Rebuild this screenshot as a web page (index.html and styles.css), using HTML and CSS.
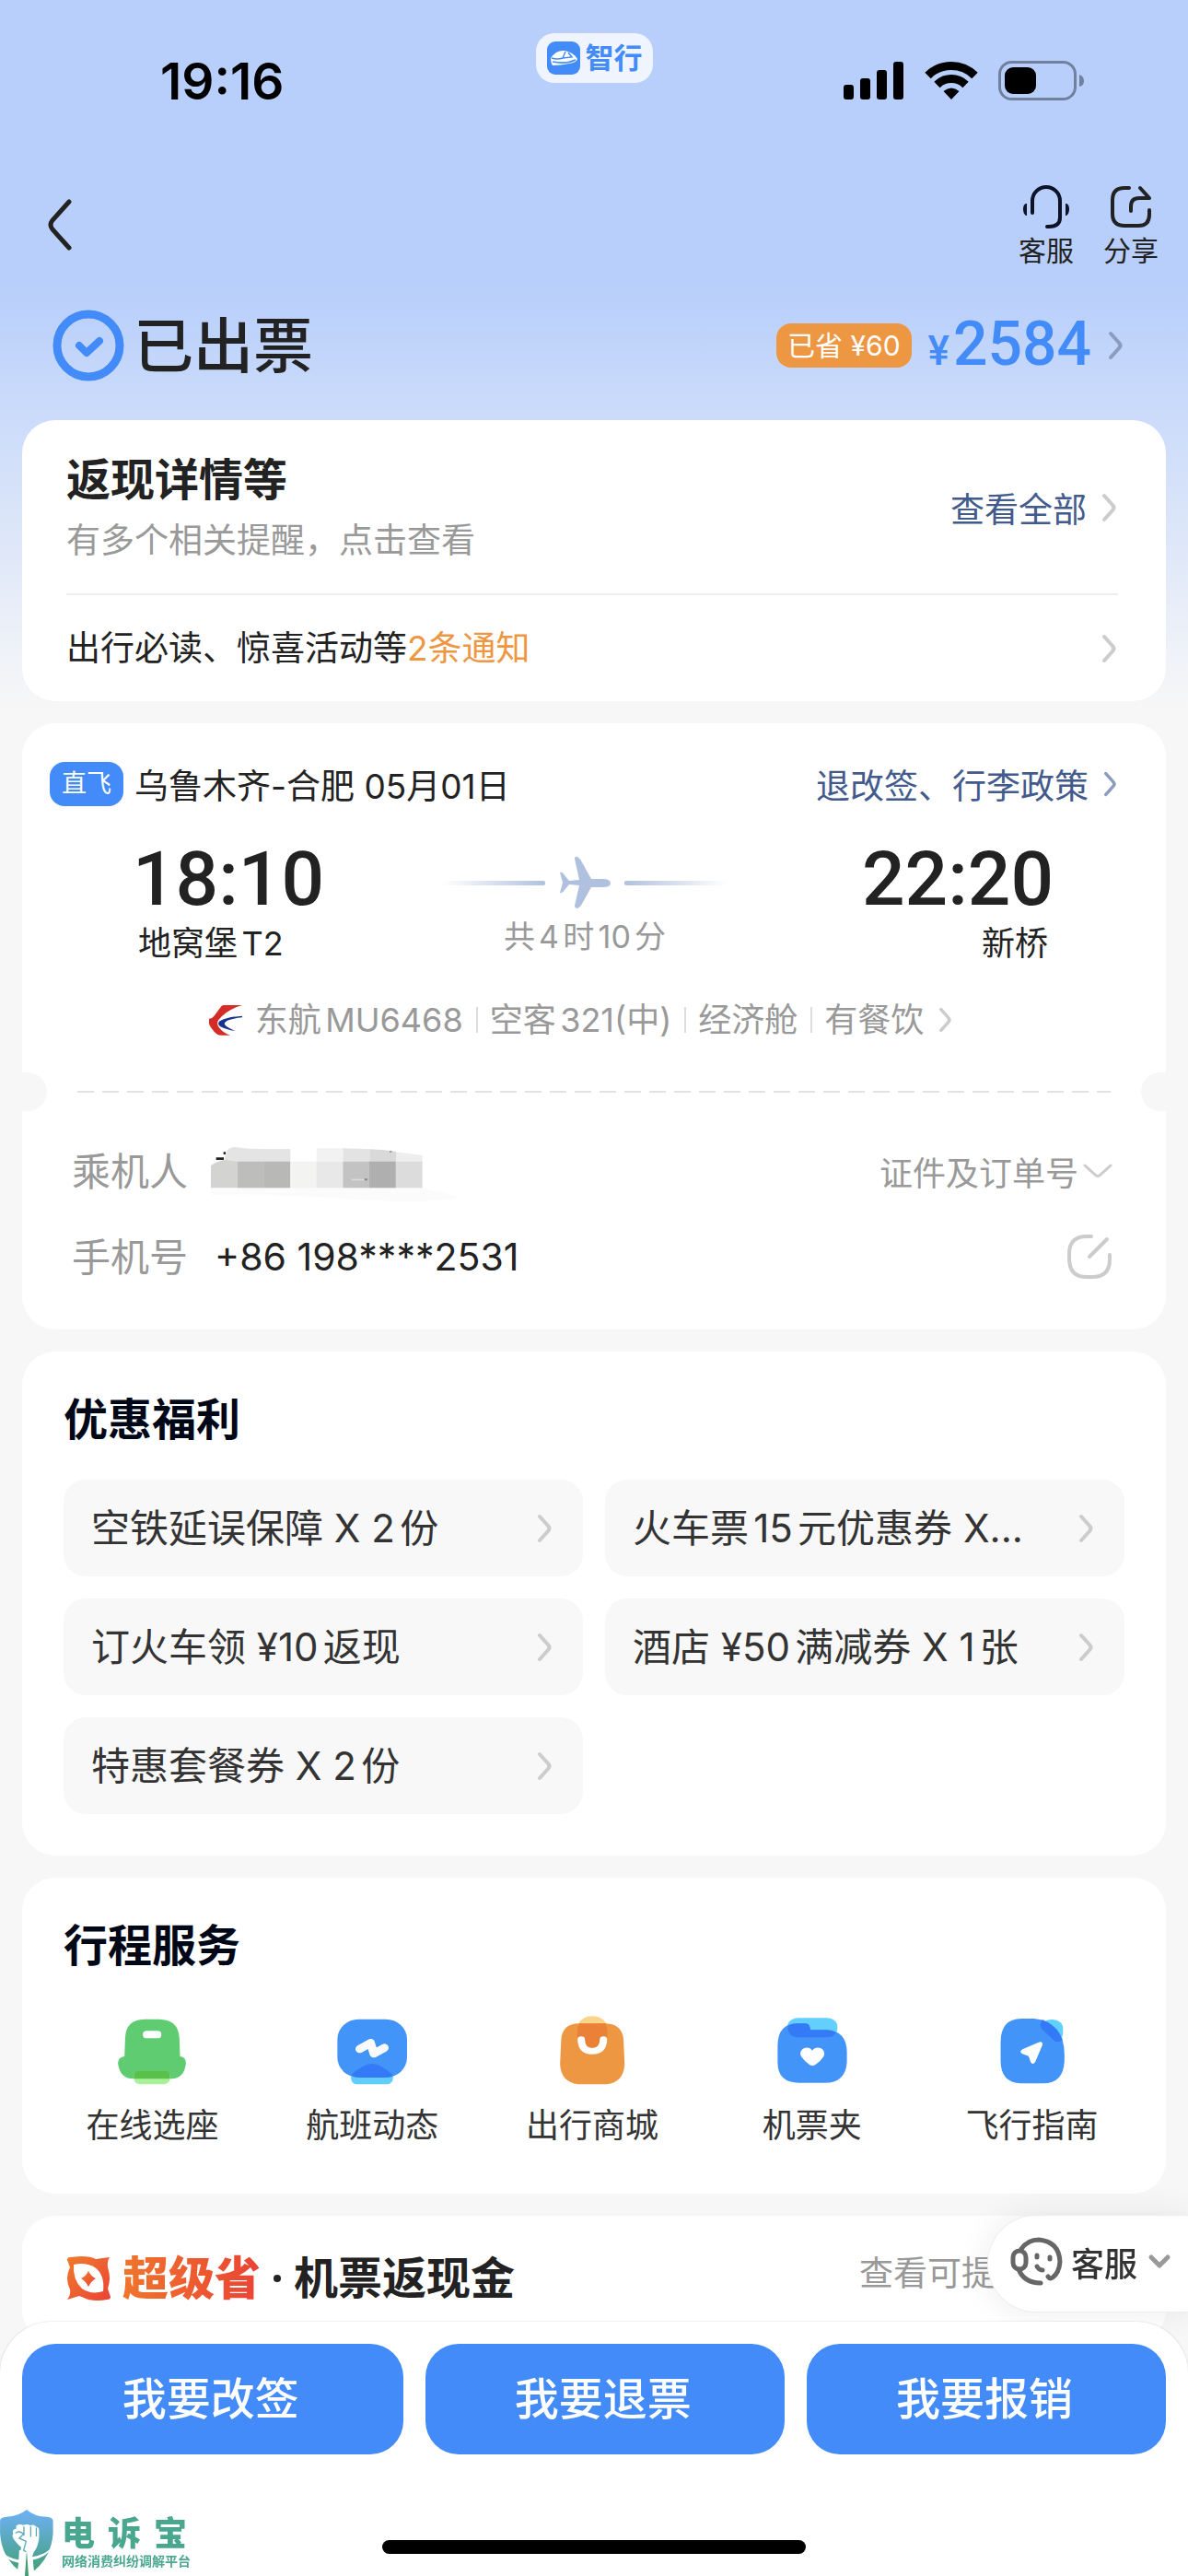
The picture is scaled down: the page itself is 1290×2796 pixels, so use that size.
FILE: index.html
```html
<!DOCTYPE html>
<html lang="zh-CN">
<head>
    <meta charset="UTF-8">
    <meta name="viewport" content="width=device-width, initial-scale=1.0">
    <title>订单详情</title>
    <link rel="stylesheet" href="styles.css">
</head>
<body>
    <svg class="symbols" width="0" height="0" aria-hidden="true">
        <symbol id="chevron" viewBox="0 0 18 32">
            <path d="M3 3l9 10q3 3 0 6l-9 10" fill="none" stroke="currentColor" stroke-width="4" stroke-linecap="round" stroke-linejoin="round"/>
        </symbol>
    </svg>

    <header>
        <div class="status-bar">
            <div class="clock">19:16</div>
            <div class="app-badge">
                <svg width="36" height="36" viewBox="0 0 36 36">
                    <rect width="36" height="36" rx="9" fill="#428bf9"/>
                    <path d="M4 18Q10 9 19 10Q29 12 33 19Q32 23 24 24Q14 26 6 26Q4 23 4 18Z" fill="#fff"/>
                    <path d="M5 18q6 2 12 0l3-7M17 18l10-1-4-5M6 22q14 3 25-2" fill="none" stroke="#428bf9" stroke-width="1.5"/>
                </svg>
                <span>智行</span>
            </div>
            <div class="status-icons">
                <svg width="66" height="44" viewBox="0 0 66 44">
                    <rect x="0" y="26" width="11" height="16" rx="3"/>
                    <rect x="18" y="19" width="11" height="23" rx="3"/>
                    <rect x="36" y="10" width="11" height="32" rx="3"/>
                    <rect x="54" y="1" width="11" height="41" rx="3"/>
                </svg>
                <svg width="58" height="44" viewBox="0 0 58 44" fill="none" stroke="#000" stroke-width="9">
                    <path d="M3.500 16A36 36 0 0 1 54.500 16"/>
                    <path d="M13.500 26A22 22 0 0 1 44.500 26"/>
                    <path d="M29 42L20.500 33Q29 26 37.500 33Z" fill="#000" stroke="none"/>
                </svg>
                <svg width="94" height="44" viewBox="0 0 94 44">
                    <rect x="1.500" y="1.500" width="82" height="40" rx="13" fill="none" stroke="#70809e" stroke-width="3"/>
                    <rect x="7" y="7" width="34" height="29" rx="9"/>
                    <path d="M88 15q5 2 5 7t-5 6z" fill="#70809e"/>
                </svg>
            </div>
        </div>

        <nav class="nav-bar">
            <button type="button" class="back" aria-label="返回">
                <svg width="30" height="58" viewBox="0 0 30 58">
                    <path d="M25 4L7 24q-4 5 0 10L25 54" fill="none" stroke="#222" stroke-width="5" stroke-linecap="round"/>
                </svg>
            </button>
            <div class="nav-actions">
                <button type="button">
                    <svg width="56" height="56" viewBox="0 0 56 56" fill="none" stroke="#0d1226" stroke-width="4" stroke-linecap="round">
                        <path d="M13 35V22a15 15 0 0 1 30 0v18q0 10-12 10h-2"/>
                        <path d="M7 25h-1q-3 1-3 6t3 7h1z" fill="#0d1226" stroke="none"/>
                        <path d="M49 25h1q3 1 3 6t-3 7h-1z" fill="#0d1226" stroke="none"/>
                    </svg>
                    <span>客服</span>
                </button>
                <button type="button">
                    <svg width="56" height="56" viewBox="0 0 56 56" fill="none" stroke="#222" stroke-width="4" stroke-linecap="round" stroke-linejoin="round">
                        <path d="M26 8H21Q8 8 8 21V36Q8 49 21 49H36Q48 49 48 37V32"/>
                        <path d="M38 8l10 11H37q-9 0-9 9v5"/>
                    </svg>
                    <span>分享</span>
                </button>
            </div>
        </nav>

        <div class="order-status">
            <svg width="80" height="80" viewBox="0 0 80 80" fill="none" stroke="#428bf9">
                <circle cx="40" cy="40" r="34" stroke-width="9"/>
                <path d="M30 40l8 8 14-13" stroke-width="8" stroke-linecap="round" stroke-linejoin="round"/>
            </svg>
            <h1>已出票</h1>
            <span class="saved">已省 ¥60</span>
            <a href="#" class="price"><span><small>¥</small>2584</span><svg class="chevron"><use href="#chevron"/></svg></a>
        </div>
    </header>

    <main>
        <section class="card notices">
            <div class="notice">
                <div>
                    <h2>返现详情等</h2>
                    <p>有多个相关提醒，点击查看</p>
                </div>
                <a href="#" class="policy">查看全部<svg class="chevron light"><use href="#chevron"/></svg></a>
            </div>
            <a href="#" class="notice-row">
                <span>出行必读、惊喜活动等<em>2条通知</em></span>
                <svg class="chevron light"><use href="#chevron"/></svg>
            </a>
        </section>

        <section class="card flight">
            <div class="flight-head">
                <span class="tag">直飞</span>
                <span class="trip">乌鲁木齐-合肥 05月01日</span>
                <a href="#" class="policy">退改签、行李政策<svg class="chevron small"><use href="#chevron"/></svg></a>
            </div>

            <div class="route">
                <div class="stop">
                    <time>18:10</time>
                    <span>地窝堡T2</span>
                </div>
                <div class="duration">
                    <div class="track">
                        <i class="line"></i>
                        <svg width="58" height="58" viewBox="0 0 58 58">
                            <path d="M2 18q3-1 5 3l5 6 11-1L18 3q0-3 3-2 3 2 5 6l10 18h12q9 0 9 4.500T48 34H36L26 52q-2 4-5 5-3 0-3-3l5-22-11-1-5 6q-2 4-5 3l3-11z" fill="#b0c1df"/>
                        </svg>
                        <i class="line end"></i>
                    </div>
                    <span>共4时10分</span>
                </div>
                <div class="stop arrive">
                    <time>22:20</time>
                    <span>新桥</span>
                </div>
            </div>

            <a href="#" class="airline">
                <svg width="36" height="33" viewBox="84 63 108 99">
                    <path d="M84 107Q95 107 102 96Q113 82 124 67Q127 63 133 63H192Q140 78 115 111Q107 122 116 135Q130 154 153 161H124Q108 161 96 143Q85 130 84 122Z" fill="#d42c28"/>
                    <path d="M192 98Q145 101 119 115Q109 123 120 132Q140 143 169 147Q137 134 134 124Q135 109 192 103Z" fill="#17338c"/>
                </svg>
                <span>东航MU6468</span>
                <span>空客321(中)</span>
                <span>经济舱</span>
                <span>有餐饮</span>
                <svg class="chevron small light"><use href="#chevron"/></svg>
            </a>

            <div class="tear">
                <svg width="100%" height="4"><line x1="0" y1="2" x2="100%" y2="2" stroke="#e2e2e2" stroke-width="2" stroke-dasharray="18 9"/></svg>
            </div>

            <div class="info">
                <span class="label">乘机人</span>
                <!-- masked passenger name -->
                <svg width="290" height="56" viewBox="88 521 870 168" aria-label="已隐藏">
                    <path d="M88 660H777L900 690Q800 715 520 695T88 684Z" fill="#fbfbfb"/>
                    <path d="M105 561h25v8h-25zM129 543h7v8h-7z" fill="#222"/>
                    <path d="M132 574Q134 527 165 527Q220 536 347 533V574Z" fill="#e4e4e4"/>
                    <path d="M432 531H518V574H432Z" fill="#f2f2f2"/>
                    <path d="M518 531L605 534V574H518Z" fill="#e3e3e3"/>
                    <path d="M605 534Q655 536 691 542V574H605Z" fill="#d9d9d9"/>
                    <path d="M691 543L777 554V574H691Z" fill="#eee"/>
                    <path d="M88 588Q100 576 132 569L174 574V660H88Z" fill="#d3d3d2"/>
                    <rect x="174" y="574" width="87" height="86" fill="#bdbdbc"/>
                    <rect x="260" y="574" width="87" height="86" fill="#b8b8b7"/>
                    <rect x="347" y="574" width="86" height="86" fill="#f3f3f2"/>
                    <rect x="432" y="574" width="86" height="86" fill="#e8e8e8"/>
                    <rect x="518" y="574" width="87" height="86" fill="#c3c3c3"/>
                    <rect x="604" y="574" width="87" height="86" fill="#afafaf"/>
                    <rect x="690" y="574" width="87" height="86" fill="#dcdcdc"/>
                    <path d="M543 631h46v5h-40z" fill="#ddd"/>
                    <path d="M588 630h10v6h-10zM670 540h7v4h-7z" fill="#888"/>
                </svg>
                <button type="button" class="more">证件及订单号
                    <svg width="32" height="18" viewBox="0 0 32 18"><path d="M2 3l11 10q3 3 6 0L30 3" fill="none" stroke="#ccc" stroke-width="3" stroke-linecap="round"/></svg>
                </button>
            </div>
            <div class="info phone">
                <span class="label">手机号</span>
                <span class="number">+86 198****2531</span>
                <button type="button" class="more" aria-label="修改手机号">
                    <svg width="50" height="50" viewBox="0 0 50 50" fill="none" stroke="#ccc" stroke-width="4" stroke-linecap="round">
                        <path d="M27 3H22Q3 3 3 22V27Q3 47 22 47H28Q47 47 47 28V23"/>
                        <path d="M25 25L44 6"/>
                    </svg>
                </button>
            </div>
        </section>

        <section class="card benefits">
            <h2>优惠福利</h2>
            <div class="benefit-grid">
                <a href="#"><span>空铁延误保障 X 2份</span><svg class="chevron light"><use href="#chevron"/></svg></a>
                <a href="#"><span>火车票15元优惠券 X...</span><svg class="chevron light"><use href="#chevron"/></svg></a>
                <a href="#"><span>订火车领 ¥10返现</span><svg class="chevron light"><use href="#chevron"/></svg></a>
                <a href="#"><span>酒店 ¥50满减券 X 1张</span><svg class="chevron light"><use href="#chevron"/></svg></a>
                <a href="#"><span>特惠套餐券 X 2份</span><svg class="chevron light"><use href="#chevron"/></svg></a>
            </div>
        </section>

        <section class="card services">
            <h2>行程服务</h2>
            <div class="service-list">
                <a href="#">
                    <svg width="76" height="76" viewBox="137 50 213 228" preserveAspectRatio="none">
                        <path d="M160 185L162 125Q164 65 220 64H266Q324 65 327 125L329 185Q347 187 347 207Q342 258 302 258H186Q146 258 140 207Q141 187 160 185Z" fill="#5fcc72"/>
                        <rect x="189" y="231" width="109" height="45" rx="18" fill="#a8f19a"/>
                        <path d="M189 258V249Q189 231 207 231H280Q298 231 298 249V258Z" fill="#59c04c"/>
                        <rect x="216" y="102" width="56" height="24" rx="11" fill="#fff"/>
                    </svg>
                    <span>在线选座</span>
                </a>
                <a href="#">
                    <svg width="76" height="76" viewBox="806 50 213 228" preserveAspectRatio="none">
                        <path d="M848 250H977Q977 276 955 276H868Q848 276 848 250Z" fill="#60cdfc"/>
                        <rect x="807" y="64" width="212" height="190" rx="65" fill="#4394f8"/>
                        <path d="M852 243Q862 232 883 219Q912 199 941 218Q962 231 974 244L975 250Q960 254 950 254H872Q860 253 850 248Z" fill="#347af6"/>
                        <path d="M875 161L908 141L918 176L950 157" fill="none" stroke="#fafbff" stroke-width="26" stroke-linecap="round" stroke-linejoin="round"/>
                    </svg>
                    <span>航班动态</span>
                </a>
                <a href="#">
                    <svg width="76" height="76" viewBox="68 50 192 228" preserveAspectRatio="none">
                        <rect x="123" y="54" width="83" height="102" rx="41" fill="#f8d58a"/>
                        <path d="M79 130Q82 79 128 78H202Q246 80 250 130L253 210Q251 270 203 276H126Q78 269 76 210Z" fill="#ed9743"/>
                        <path d="M130 78H200Q207 92 206 120V125Q195 157 164 157Q133 157 123 125V105Q123 90 130 78Z" fill="#eb8137"/>
                        <path d="M134 130Q135 168 164 168Q194 168 195 130" fill="none" stroke="#fff" stroke-width="20" stroke-linecap="round"/>
                    </svg>
                    <span>出行商城</span>
                </a>
                <a href="#">
                    <svg width="76" height="76" viewBox="670 50 192 228" preserveAspectRatio="none">
                        <rect x="698" y="60" width="137" height="63" rx="28" fill="#62cffd"/>
                        <path d="M671 150Q672 78 724 78H748Q759 78 761 99H805Q860 102 861 170V205Q857 271 800 271H730Q671 270 671 205Z" fill="#4394f8"/>
                        <path d="M699 85Q712 78 724 78H748Q759 78 761 99H805Q820 99 831 107Q824 123 807 123H725Q702 122 699 96Z" fill="#347af6"/>
                        <path d="M766 166Q758 152 744 158Q728 168 736 186Q744 200 759 213Q767 218 774 213Q790 200 797 186Q804 168 789 158Q775 152 766 166Z" fill="#fff"/>
                    </svg>
                    <span>机票夹</span>
                </a>
                <a href="#">
                    <svg width="76" height="76" viewBox="1274 50 192 228" preserveAspectRatio="none">
                        <rect x="1393" y="65" width="61" height="72" rx="28" fill="#60d0fc"/>
                        <path d="M1283 140Q1283 62 1340 62H1374Q1458 72 1458 180V200Q1455 273 1400 273H1338Q1283 270 1283 200Z" fill="#4394f8"/>
                        <path d="M1398 66Q1436 85 1453 131Q1443 141 1432 136L1395 95Q1388 78 1398 66Z" fill="#347af6"/>
                        <path d="M1343 162L1386 140Q1398 134 1398 147L1378 203Q1371 215 1365 203L1361 188Q1360 182 1353 181L1343 177Q1332 171 1343 162Z" fill="#fff"/>
                    </svg>
                    <span>飞行指南</span>
                </a>
            </div>
        </section>

        <section class="card cashback">
            <svg width="48" height="48" viewBox="0 0 48 48">
                <defs>
                    <linearGradient id="flame" x1="0" y1="0" x2="1" y2="1">
                        <stop offset="0" stop-color="#f07b2c"/>
                        <stop offset="1" stop-color="#ea4335"/>
                    </linearGradient>
                </defs>
                <path d="M1 4Q1 1 4 1L16 0Q27 0 32 3L47 1Q44 6 45 12Q49 24 45 35L48 44Q48 47 44 47Q34 49 24 47Q17 44 14 43L1 47Q5 42 4 36Q-2 24 4 12Z" fill="url(#flame)"/>
                <path d="M8 9Q21 6 31 12Q42 20 40 38Q27 42 17 35Q7 26 8 9Z" fill="#fff"/>
                <path d="M24 16Q27 22 32 24Q27 27 24 33Q21 27 16 24Q21 22 24 16Z" fill="url(#flame)"/>
            </svg>
            <h2><span class="brand">超级省</span><span class="dot"></span>机票返现金</h2>
            <a href="#">查看可提现</a>
        </section>
    </main>

    <button type="button" class="float-service">
        <svg width="58" height="54" viewBox="0 0 58 54" fill="none" stroke="#666" stroke-width="5" stroke-linecap="round">
            <path d="M12 13Q19 3 31 3Q53 5 54 27Q53 39 46 44Q43 46 41 43"/>
            <path d="M9 35Q15 50 33 50"/>
            <rect x="3" y="15" width="14" height="20" rx="7"/>
            <path d="M29 20v2M43 22v2M29 32q2 4 6 4"/>
        </svg>
        <span>客服</span>
        <svg width="24" height="16" viewBox="0 0 24 16"><path d="M3 3l9 9 9-9" fill="none" stroke="#999" stroke-width="5" stroke-linecap="round" stroke-linejoin="round"/></svg>
    </button>

    <footer class="action-bar">
        <div class="actions">
            <button type="button">我要改签</button>
            <button type="button">我要退票</button>
            <button type="button">我要报销</button>
        </div>
        <div class="home-indicator"></div>
        <div class="watermark">
            <svg width="58" height="72" viewBox="0 74 172 214">
                <defs>
                    <linearGradient id="shield" x1="0" y1="0" x2="0" y2="1">
                        <stop offset="0" stop-color="#6fb1f7"/>
                        <stop offset="1" stop-color="#3f9f6f"/>
                    </linearGradient>
                </defs>
                <path d="M86 74Q110 96 150 97Q171 99 171 110V150Q165 240 86 288Q5 240 0 150V110Q0 98 22 97Q60 95 86 74Z" fill="url(#shield)"/>
                <path d="M42 150Q38 138 52 136L52 126Q62 119 75 124Q87 118 98 125Q110 120 116 129Q126 130 126 142V165Q122 195 112 207L108 212H65L68 195Q45 175 40 160Z" fill="#fff"/>
                <path d="M62 205H110L104 226Q145 220 167 195Q155 225 106 236L110 276 92 288H78L56 272L60 246Q15 236 3 208Q30 232 60 236Z" fill="#fff"/>
                <path d="M77 128V158M99 128V162M117 132V160M50 150Q60 140 76 152L62 166 84 176 76 205 84 210" fill="none" stroke="#5daab4" stroke-width="4"/>
                <path d="M86 205L80 288H92Z" fill="#3f9f6f"/>
            </svg>
            <div>
                <strong><span>电</span><span>诉</span><span>宝</span></strong>
                <small>网络消费纠纷调解平台</small>
            </div>
        </div>
    </footer>
</body>
</html>
```
FILE: styles.css
```css
* {
    box-sizing: border-box;
}

body {
    margin: 0;
    min-height: 100vh;
    padding-bottom: 276px;
    font-family: Inter, "Noto Sans CJK SC", sans-serif;
    font-size: 36px;
    color: #222;
    background: #f7f7f7 linear-gradient(#b8cffb 0, #b8cffb 310px, #f7f7f7 770px) no-repeat;
    text-autospace: normal;
}

h1, h2, p {
    margin: 0;
}

a {
    color: inherit;
    text-decoration: none;
}

button {
    margin: 0;
    padding: 0;
    border: none;
    background: none;
    font: inherit;
    color: inherit;
    cursor: pointer;
}

svg {
    display: block;
    flex: none;
    overflow: visible;
}

.symbols {
    position: absolute;
}

.chevron {
    width: 18px;
    height: 32px;
    color: #8b9cbe;
}

.chevron.small {
    width: 16px;
    height: 28px;
}

.chevron.light {
    color: #ccc;
}

/* header */
.status-bar {
    display: grid;
    grid-template-columns: minmax(0, 1fr) auto minmax(0, 1fr);
    align-items: center;
    padding-top: 36px;
    height: 140px;
}

.clock {
    padding-left: 174px;
    font-size: 55px;
    font-weight: 600;
    line-height: 64px;
    color: #000;
}

.app-badge {
    align-self: start;
    display: flex;
    align-items: center;
    gap: 6px;
    padding: 9px 11px 9px 12px;
    border-radius: 20px;
    background: #eff4fe;
    color: #428bf9;
    font-size: 31px;
    font-weight: 700;
    line-height: 36px;
}

.status-icons {
    display: flex;
    justify-content: flex-end;
    gap: 22px;
    padding-right: 112px;
}

.nav-bar {
    display: flex;
    justify-content: space-between;
    align-items: center;
    padding: 56px 32px 0 50px;
}

.nav-actions {
    display: flex;
    gap: 32px;
}

.nav-actions button {
    display: flex;
    flex-direction: column;
    align-items: center;
    font-size: 30px;
    line-height: 40px;
}

.order-status {
    display: flex;
    align-items: center;
    height: 88px;
    margin: 39px 0 37px;
    padding: 0 69px 0 56px;
}

.order-status h1 {
    flex: 1;
    margin-left: 9px;
    padding-bottom: 8px;
    font-size: 65px;
    font-weight: 500;
}

.saved {
    margin-right: 18px;
    padding: 0 12px;
    border-radius: 16px;
    background: #ed9743;
    color: #fff;
    font-size: 30px;
    line-height: 48px;
}

.price {
    display: flex;
    align-items: center;
    color: #428bf9;
    font-family: Roboto, sans-serif;
    font-size: 66px;
    font-weight: 500;
    line-height: 88px;
}

.price span {
    padding-top: 4px;
}

.price small {
    margin-right: 4px;
    font-size: 44px;
}

.price .chevron {
    margin-left: 18px;
}

/* cards */
.card {
    margin: 0 24px 24px;
    border-radius: 36px;
    background: #fff;
}

.card h2 {
    font-size: 48px;
    font-weight: 700;
}

.notices {
    padding: 0 52px 0 48px;
}

.notice {
    display: flex;
    justify-content: space-between;
    align-items: center;
    padding: 36px 0 29px;
    border-bottom: 2px solid #eee;
}

.notice h2 {
    line-height: 58px;
}

.notice p {
    margin-top: 9px;
    color: #999;
    font-size: 37px;
    line-height: 56px;
}

.notice .policy {
    padding-bottom: 6px;
}

.policy {
    display: flex;
    align-items: center;
    gap: 16px;
    color: #425a8c;
    font-size: 37px;
}

.notice-row {
    display: flex;
    justify-content: space-between;
    align-items: center;
    padding: 30px 0;
    font-size: 37px;
    line-height: 55px;
    text-autospace: no-autospace;
}

.notice-row em {
    color: #ed9743;
    font-style: normal;
}

/* flight */
.flight {
    padding: 40px 0 51px;
}

.flight-head {
    display: flex;
    align-items: center;
    height: 52px;
    padding: 0 52px 0 30px;
}

.tag {
    padding: 0 13px;
    border-radius: 16px;
    background: #428bf9;
    color: #fff;
    font-size: 27px;
    line-height: 48px;
}

.trip {
    flex: 1;
    margin-left: 12px;
    font-size: 37px;
    text-autospace: no-autospace;
}

.route {
    display: flex;
    justify-content: space-between;
    margin-top: 31px;
    padding: 0 122px 0 120px;
}

.stop {
    display: flex;
    flex-direction: column;
}

.stop time {
    font-family: Roboto, sans-serif;
    font-size: 82px;
    font-weight: 500;
    line-height: 92px;
}

.stop span {
    margin: 0 6px;
    line-height: 48px;
}

.arrive {
    align-items: flex-end;
}

.duration {
    display: flex;
    flex-direction: column;
    align-items: center;
    margin-right: 18px;
    padding-top: 21px;
    color: #999;
    font-size: 34px;
    line-height: 60px;
}

.track {
    display: flex;
    align-items: center;
    gap: 14px;
}

.line {
    width: 112px;
    height: 5px;
    border-radius: 2px;
    background: linear-gradient(to right, #fff, #b0c1df);
}

.line.end {
    background: linear-gradient(to left, #fff, #b0c1df);
}

.airline {
    display: flex;
    justify-content: center;
    align-items: center;
    margin-top: 35px;
    padding-right: 28px;
    color: #999;
    line-height: 48px;
}

.airline span {
    display: flex;
    align-items: center;
    margin-left: 14px;
}

.airline span + span::before {
    content: "";
    width: 2px;
    height: 28px;
    margin-right: 13px;
    background: #ddd;
}

.airline .chevron {
    margin-left: 16px;
}

.tear {
    display: flex;
    align-items: center;
    gap: 33px;
    margin-top: 33px;
}

.tear svg {
    flex: 1;
    min-width: 0;
}

.tear::before, .tear::after {
    content: "";
    width: 27px;
    height: 42px;
    border-radius: 0 21px 21px 0;
    background: #f7f7f7;
}

.tear::after {
    border-radius: 21px 0 0 21px;
}

.info {
    display: flex;
    align-items: center;
    height: 56px;
    margin-top: 37px;
    padding: 0 58px 0 54px;
}

.label {
    margin-right: 25px;
    padding-bottom: 6px;
    color: #999;
    font-size: 42px;
}

.number {
    margin-left: 4px;
    font-size: 41px;
}

.more {
    display: flex;
    align-items: center;
    gap: 5px;
    margin-left: auto;
    color: #999;
}

/* benefits */
.benefits {
    padding: 42px 45px 45px;
}

.benefits h2, .services h2 {
    color: #000818;
    line-height: 64px;
}

.benefit-grid {
    display: grid;
    grid-template-columns: 1fr 1fr;
    gap: 24px;
    margin-top: 33px;
}

.benefit-grid a {
    display: flex;
    justify-content: space-between;
    align-items: center;
    height: 105px;
    padding: 0 32px 0 30px;
    border-radius: 24px;
    background: #f8f8f8;
    color: #333;
    font-size: 42px;
    white-space: nowrap;
}

.benefit-grid span {
    padding-bottom: 6px;
}

/* services */
.services {
    padding: 42px 26px 50px 22px;
}

.services h2 {
    margin-left: 23px;
}

.service-list {
    display: grid;
    grid-template-columns: repeat(5, 1fr);
    margin-top: 43px;
}

.service-list a {
    display: flex;
    flex-direction: column;
    align-items: center;
    gap: 20px;
    color: #333;
    line-height: 48px;
}

.cashback {
    display: flex;
    align-items: center;
    margin-bottom: 0;
    padding: 36px 148px 38px 48px;
    line-height: 64px;
}

.cashback h2 {
    flex: 1;
    display: flex;
    align-items: center;
    margin-left: 13px;
}

.cashback a {
    padding-bottom: 10px;
    color: #999;
    font-size: 37px;
    line-height: 54px;
}

.brand {
    background: linear-gradient(to right, #f0752c, #ea4335);
    background-clip: text;
    -webkit-background-clip: text;
    color: transparent;
    font-size: 50px;
    font-weight: 900;
}

.dot {
    width: 8px;
    height: 8px;
    margin: 0 14px;
    border-radius: 50%;
    background: #222;
}

/* floating controls */
.float-service {
    position: fixed;
    right: 0;
    bottom: 286px;
    display: flex;
    align-items: center;
    height: 106px;
    padding: 0 19px 4px 24px;
    border: 1px solid #eee;
    border-right: none;
    border-radius: 53px 0 0 53px;
    background: #fff;
    box-shadow: 0 0 36px rgba(0, 0, 0, 0.08);
    color: #333;
    font-weight: 500;
}

.float-service span {
    margin: 0 12px 0 8px;
}

.action-bar {
    position: fixed;
    left: 0;
    right: 0;
    bottom: 0;
    padding: 24px;
    border-radius: 56px 56px 0 0;
    background: #fff;
    box-shadow: 0 0 2px rgba(0, 0, 0, 0.2);
}

.actions {
    display: grid;
    grid-template-columns: 53fr 50fr 50fr;
    gap: 24px;
}

.actions button {
    height: 120px;
    padding: 0 4px 8px 0;
    border-radius: 36px;
    background: #428bf9;
    color: #fff;
    font-size: 48px;
    font-weight: 500;
}

.home-indicator {
    width: 37%;
    height: 15px;
    margin: 93px auto 0;
    border-radius: 8px;
    background: #000;
}

.watermark {
    position: absolute;
    left: 0;
    bottom: 0;
    display: flex;
    align-items: center;
    gap: 9px;
    color: #4aa78f;
}

.watermark strong {
    display: flex;
    gap: 14px;
    font-size: 36px;
    font-weight: 900;
    line-height: 40px;
}

.watermark small {
    display: block;
    font-size: 14px;
    font-weight: 700;
    line-height: 20px;
}
```
